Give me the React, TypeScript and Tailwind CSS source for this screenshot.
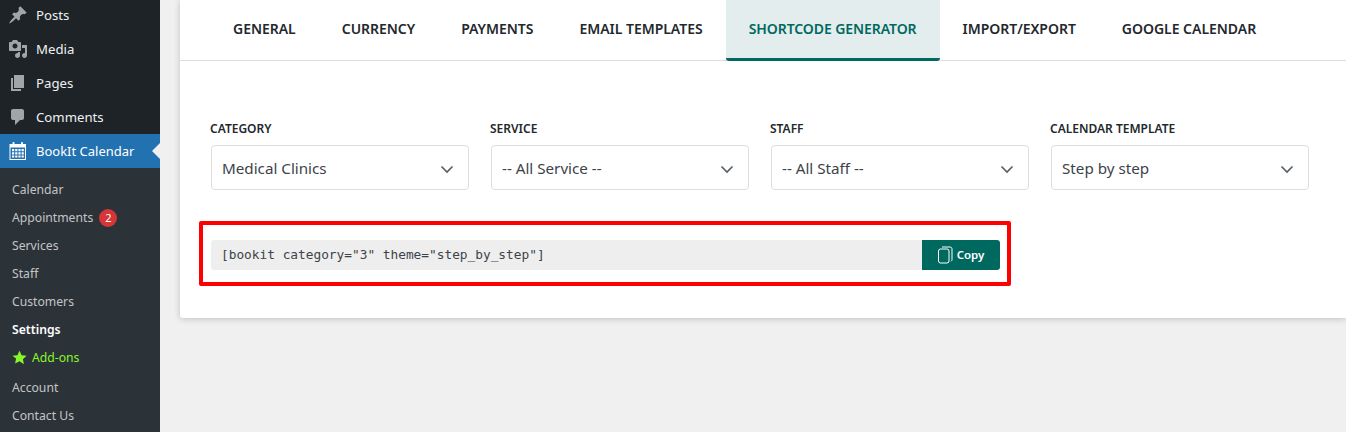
const topMenu = [
  {
    label: 'Posts',
    d: 'M10.44 3.02l1.82-1.82 6.36 6.35-1.83 1.82c-1.05-.68-2.48-.57-3.41.36l-.75.75c-.92.93-1.04 2.35-.35 3.41l-1.83 1.82-2.41-2.41-2.8 2.79c-.42.42-3.38 2.71-3.8 2.29s1.86-3.39 2.28-3.81l2.79-2.79L4.1 9.36l1.83-1.82c1.05.69 2.48.57 3.4-.36l.75-.75c.93-.92 1.05-2.35.36-3.41z',
  },
  {
    label: 'Media',
    d: 'M13 11V4c0-.55-.45-1-1-1h-1.67L9 1H5L3.67 3H2c-.55 0-1 .45-1 1v7c0 .55.45 1 1 1h10c.55 0 1-.45 1-1zM7 4.5c1.38 0 2.5 1.12 2.5 2.5S8.38 9.5 7 9.5 4.5 8.38 4.5 7 5.62 4.5 7 4.5zM14 6h5v10.5c0 1.38-1.12 2.5-2.5 2.5S14 17.88 14 16.5s1.12-2.5 2.5-2.5c.17 0 .34.02.5.05V9h-3V6zm-4 8.05V13h2v3.5c0 1.38-1.12 2.5-2.5 2.5S7 17.88 7 16.5 8.12 14 9.5 14c.17 0 .34.02.5.05z',
  },
  { label: 'Pages', d: 'M6 15V2h10v13H6zm-1 1h8v2H3V5h2v11z' },
  {
    label: 'Comments',
    d: 'M5 2h9c1.1 0 2 .9 2 2v7c0 1.1-.9 2-2 2h-2l-5 5v-5H5c-1.1 0-2-.9-2-2V4c0-1.1.9-2 2-2z',
  },
];

const tabs = ['GENERAL', 'CURRENCY', 'PAYMENTS', 'EMAIL TEMPLATES', 'SHORTCODE GENERATOR', 'IMPORT/EXPORT', 'GOOGLE CALENDAR'];

const filters = [
  { label: 'CATEGORY', value: 'Medical Clinics' },
  { label: 'SERVICE', value: '-- All Service --' },
  { label: 'STAFF', value: '-- All Staff --' },
  { label: 'CALENDAR TEMPLATE', value: 'Step by step' },
];

function CalendarIcon() {
  return (
    <svg width="20" height="20" viewBox="0 0 20 20" fill="none">
      <rect x="2" y="3.5" width="15.5" height="15" stroke="white" strokeWidth="1" fill="none" />
      <rect x="2" y="3" width="15.5" height="3.5" fill="white" />
      <rect x="4.5" y="1" width="2" height="3.5" rx="1" fill="white" />
      <rect x="13" y="1" width="2" height="3.5" rx="1" fill="white" />
      <path
        d="M4 8h2.2v2.2H4zM7.2 8h2.2v2.2H7.2zM10.4 8h2.2v2.2h-2.2zM13.6 8h2.2v2.2h-2.2zM4 11.2h2.2v2.2H4zM7.2 11.2h2.2v2.2H7.2zM10.4 11.2h2.2v2.2h-2.2zM13.6 11.2h2.2v2.2h-2.2zM4 14.4h2.2v2.2H4zM7.2 14.4h2.2v2.2H7.2zM10.4 14.4h2.2v2.2h-2.2zM13.6 14.4h2.2v2.2h-2.2z"
        fill="white"
      />
    </svg>
  );
}

function SubItem({ children, className = '' }: { children: React.ReactNode; className?: string }) {
  return <div className={`flex h-7 items-center pl-3 text-[12.2px] ${className}`}>{children}</div>;
}

export default function App() {
  return (
    <div className="flex h-[432px] w-[1346px] overflow-hidden bg-[#f0f0f1] font-['Noto_Sans',sans-serif]">
      {/* WP admin menu */}
      <div className="w-40 shrink-0 bg-[#1d2327]">
        <div className="-mt-0.5">
          {topMenu.map((item) => (
            <div key={item.label} className="flex h-[34px] items-center text-[13.2px] text-[#f0f0f1]">
              <svg width="20" height="20" viewBox="0 0 20 20" className="ml-2 mr-2 fill-[#a0a5aa]">
                <path d={item.d} />
              </svg>
              <span className="pt-0.5">{item.label}</span>
            </div>
          ))}
        </div>
        <div className="relative flex h-[34px] items-center bg-[#2271b1] text-[13px] text-white">
          <span className="ml-2 mr-2">
            <CalendarIcon />
          </span>
          <span className="pt-0.5">BookIt Calendar</span>
          <span className="absolute right-0 top-[9px] h-0 w-0 border-y-8 border-r-8 border-y-transparent border-r-[#f0f0f1]" />
        </div>
        <div className="h-full bg-[#2c3338] pt-2 text-[#c3c4c7]">
          <SubItem>Calendar</SubItem>
          <SubItem>
            Appointments
            <span className="ml-[6px] flex h-[18px] w-[18px] items-center justify-center rounded-full bg-[#d63638] text-[11px] text-white">
              2
            </span>
          </SubItem>
          <SubItem>Services</SubItem>
          <SubItem>Staff</SubItem>
          <SubItem>Customers</SubItem>
          <SubItem className="font-semibold text-white">Settings</SubItem>
          <SubItem className="text-[#86f72a]">
            <svg width="15" height="15" viewBox="0 0 24 24" className="mb-0.5 mr-[5px] fill-[#86f72a]">
              <path d="M12 1l3.4 7.3 7.9 1-5.8 5.4 1.5 7.9L12 17.8l-7 3.8 1.5-7.9L.7 9.3l7.9-1z" />
            </svg>
            Add-ons
          </SubItem>
          <SubItem className="mt-0.5">Account</SubItem>
          <SubItem>Contact Us</SubItem>
        </div>
      </div>

      {/* Settings card */}
      <div className="ml-5 h-[318px] flex-1 rounded-bl-[3px] bg-white shadow-[0_1px_6px_rgba(0,0,0,0.2)]">
        <div className="flex h-[61px] border-b border-[#dddddd] pl-[30px]">
          {tabs.map((tab) =>
            tab === 'SHORTCODE GENERATOR' ? (
              <div
                key={tab}
                className="flex h-[61px] items-center rounded-b-[3px] border-b-[3px] border-[#00695f] bg-[#e3eded] px-[23px] text-sm font-semibold tracking-[-0.08px] text-[#00695f]"
              >
                {tab}
              </div>
            ) : (
              <div key={tab} className="flex items-center px-[23px] pb-0.5 text-sm font-semibold tracking-[-0.03px] text-[#23282d]">
                {tab}
              </div>
            ),
          )}
        </div>

        <div className="flex gap-[22px] pl-[31px] pt-[60px]">
          {filters.map((f) => (
            <div key={f.label} className="w-[258px]">
              <div className="-ml-px mb-2 text-xs font-semibold leading-4 text-[#23282d]">{f.label}</div>
              <div className="flex h-[45px] items-center justify-between rounded border border-[#dddddd] pl-[10px] pr-[14px] pt-0.5 text-[15.2px] text-[#3c434a]">
                {f.value}
                <svg width="14" height="14" viewBox="0 0 14 14" fill="none" stroke="#555d66" strokeWidth="1.6">
                  <path d="M1.5 4.5 7 10l5.5-5.5" />
                </svg>
              </div>
            </div>
          ))}
        </div>

        {/* Shortcode output */}
        <div className="ml-[19px] mt-[31px] flex h-[65px] w-[812px] items-center rounded-[2px] border-4 border-[#ff0000] pl-2 pt-[3px]">
          <div className="flex h-[30px] w-[711px] items-center rounded-l-[3px] bg-[#eeeeee] pl-[10px] font-['DejaVu_Sans_Mono',monospace] text-[12.8px] text-[#3c434a]">
            {'[bookit category="3" theme="step_by_step"]'}
          </div>
          <div className="flex h-[30px] w-[78px] items-center justify-center gap-1 rounded-r-[3px] bg-[#00695f] text-[11.5px] font-semibold text-white">
            <svg width="15" height="18" viewBox="0 0 15 18" fill="none" stroke="white" strokeWidth="1">
              <rect x="0.5" y="3" width="10.5" height="14" rx="2" />
              <path d="M4 1h8c1.2 0 2 .8 2 2v10.5c0 .8-.4 1.5-1 1.8" />
            </svg>
            Copy
          </div>
        </div>
      </div>
    </div>
  );
}
